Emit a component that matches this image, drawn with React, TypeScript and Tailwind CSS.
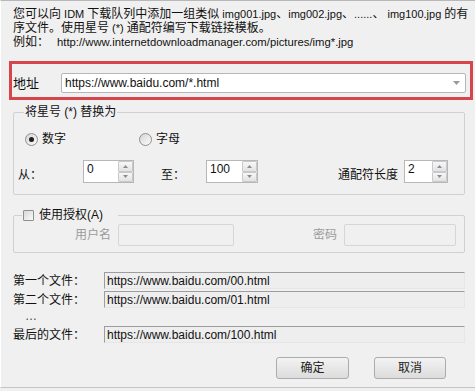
import React from "react";

const FONT = "font-[family-name:'Liberation_Sans','Noto_Sans_CJK_SC',sans-serif]";

function SpinButton({ up }: { up?: boolean }) {
  return (
    <div className="flex flex-1 items-center justify-center rounded-[1px] border border-[#c9c9c9] bg-gradient-to-b from-[#f7f7f7] to-[#e3e3e3]">
      <svg width="5" height="3" viewBox="0 0 5 3">
        {up ? <path d="M0 3 L2.5 0 L5 3 Z" fill="#8d8d8d" /> : <path d="M0 0 L2.5 3 L5 0 Z" fill="#8d8d8d" />}
      </svg>
    </div>
  );
}

function Spinner({ value, width }: { value: string; width: string }) {
  return (
    <div className={`flex h-[23px] ${width} border border-[#b5b7bd] bg-white`}>
      <span className="flex-1 pl-[3px] pt-[1px] text-[12px] leading-[14px]">{value}</span>
      <div className="flex w-[15px] flex-col">
        <SpinButton up />
        <SpinButton />
      </div>
    </div>
  );
}

function Radio({ checked, label }: { checked?: boolean; label: string }) {
  return (
    <div className="flex items-center gap-[4px]">
      <span className="flex h-[13px] w-[13px] items-center justify-center rounded-full border border-[#8e8f8f] bg-gradient-to-br from-[#d6d6d6] to-[#fbfbfb]">
        {checked && <span className="h-[5px] w-[5px] rounded-full bg-[#1f1f1f]" />}
      </span>
      <span>{label}</span>
    </div>
  );
}

function FileRow({ label, url }: { label: string; url: string }) {
  return (
    <div className="flex h-[17px] items-center">
      <span className="w-[103px] pl-[12px]">{label}</span>
      <div className="flex h-[17px] w-[361px] items-center border-t border-l border-t-[#9d9d9d] border-l-[#9d9d9d] border-r border-b border-r-[#e6e6e6] border-b-[#e6e6e6] bg-[#eeeeee] pl-[2px]">
        {url}
      </div>
    </div>
  );
}

// Latin parts of the description use a slightly narrower size, like the original UI font
function L({ children }: { children: React.ReactNode }) {
  return <span className="text-[11px]">{children}</span>;
}

export default function App() {
  return (
    <div className={`h-[391px] w-[475px] overflow-hidden bg-[#f0f0f0] text-[12px] leading-[14px] text-[#111] ${FONT}`}>
      <div className="h-[388px] border-t border-b border-l border-t-[#b8b8b8] border-b-[#c4c4c4] border-l-white">
        {/* description */}
        <div className="whitespace-nowrap pl-[12px] pt-[6px]">
          <div>
            您可以向<L> IDM </L>下载队列中添加一组类似<L> img001.jpg</L>、<L>img002.jpg</L>、<L>......</L>、<L> img100.jpg </L>的有
          </div>
          <div>
            序文件。使用星号<L> (*) </L>通配符编写下载链接模板。
          </div>
          <div className="flex">
            <span className="w-[44px]">例如：</span>
            <span className="text-[11.3px]">http://www.internetdownloadmanager.com/pictures/img*.jpg</span>
          </div>
        </div>

        {/* address */}
        <div className="ml-[8px] mt-[12px] flex w-[464px] items-center border-[3px] border-[#d5454b] pb-[4px] pl-[1px] pt-[9px]">
          <span className="w-[48px] pt-[2px] text-[13px]">地址</span>
          <div className="flex h-[20px] w-[405px] items-center justify-between rounded-[2px] border border-[#b5b7bd] bg-white pl-[3px] pr-[5px]">
            <span>https://www.baidu.com/*.html</span>
            <svg width="7" height="4" viewBox="0 0 7 4">
              <path d="M0 0 L3.5 4 L7 0 Z" fill="#9a9a9a" />
            </svg>
          </div>
        </div>

        {/* replace group */}
        <fieldset className="ml-[12px] mt-[5px] w-[452px] rounded-[2px] border border-[#d0d0d0] pb-[11px] pl-[4px] pr-[16px]">
          <legend className="ml-[6px] px-[1px]">将星号 (*) 替换为</legend>
          <div className="ml-[7px] mt-[13px] flex">
            <div className="w-[114px]">
              <Radio checked label="数字" />
            </div>
            <Radio label="字母" />
          </div>
          <div className="mt-[14px] flex items-end">
            <span className="mb-[1px] w-[65px]">从：</span>
            <Spinner value="0" width="w-[51px]" />
            <span className="mb-[1px] ml-[27px] w-[45px]">至：</span>
            <Spinner value="100" width="w-[52px]" />
            <div className="flex-1" />
            <span className="mb-[1px] mr-[6px]">通配符长度</span>
            <Spinner value="2" width="w-[44px]" />
          </div>
        </fieldset>

        {/* auth group */}
        <fieldset className="ml-[12px] mt-[13px] w-[452px] rounded-[2px] border border-[#d0d0d0] pb-[6px] pr-[8px]">
          <legend className="ml-[8px] flex items-center gap-[5px] pl-[1px] pr-[15px]">
            <span className="h-[11px] w-[11px] rounded-[1px] border border-[#8e8f8f] bg-gradient-to-br from-[#d8d8d8] to-[#fafafa]" />
            <span>使用授权(A)</span>
          </legend>
          <div className="mt-[2px] flex items-center text-[#9b9b9b]">
            <span className="w-[97px] text-right">用户名</span>
            <div className="ml-[7px] h-[22px] w-[116px] rounded-[2px] border border-[#d6d6d6] bg-[#f0f0f0]" />
            <span className="w-[103px] text-right">密码</span>
            <div className="ml-[7px] h-[22px] w-[112px] rounded-[2px] border border-[#d6d6d6] bg-[#f0f0f0]" />
          </div>
        </fieldset>

        {/* files */}
        <div className="mt-[19px] flex flex-col">
          <FileRow label="第一个文件：" url="https://www.baidu.com/00.html" />
          <div className="mt-[2px]">
            <FileRow label="第二个文件：" url="https://www.baidu.com/01.html" />
          </div>
          <div className="h-[18px] pl-[24px] pt-[1px] text-[#444]">…</div>
          <FileRow label="最后的文件：" url="https://www.baidu.com/100.html" />
        </div>

        {/* buttons */}
        <div className="mt-[14px] flex justify-end gap-[25px] pr-[29px]">
          <button className="h-[22px] w-[73px] rounded-[3px] border border-[#acacac] bg-gradient-to-b from-[#f3f3f3] to-[#dcdcdc] text-[#222]">
            确定
          </button>
          <button className="h-[22px] w-[72px] rounded-[3px] border border-[#acacac] bg-gradient-to-b from-[#f3f3f3] to-[#dcdcdc] text-[#222]">
            取消
          </button>
        </div>
      </div>
    </div>
  );
}
